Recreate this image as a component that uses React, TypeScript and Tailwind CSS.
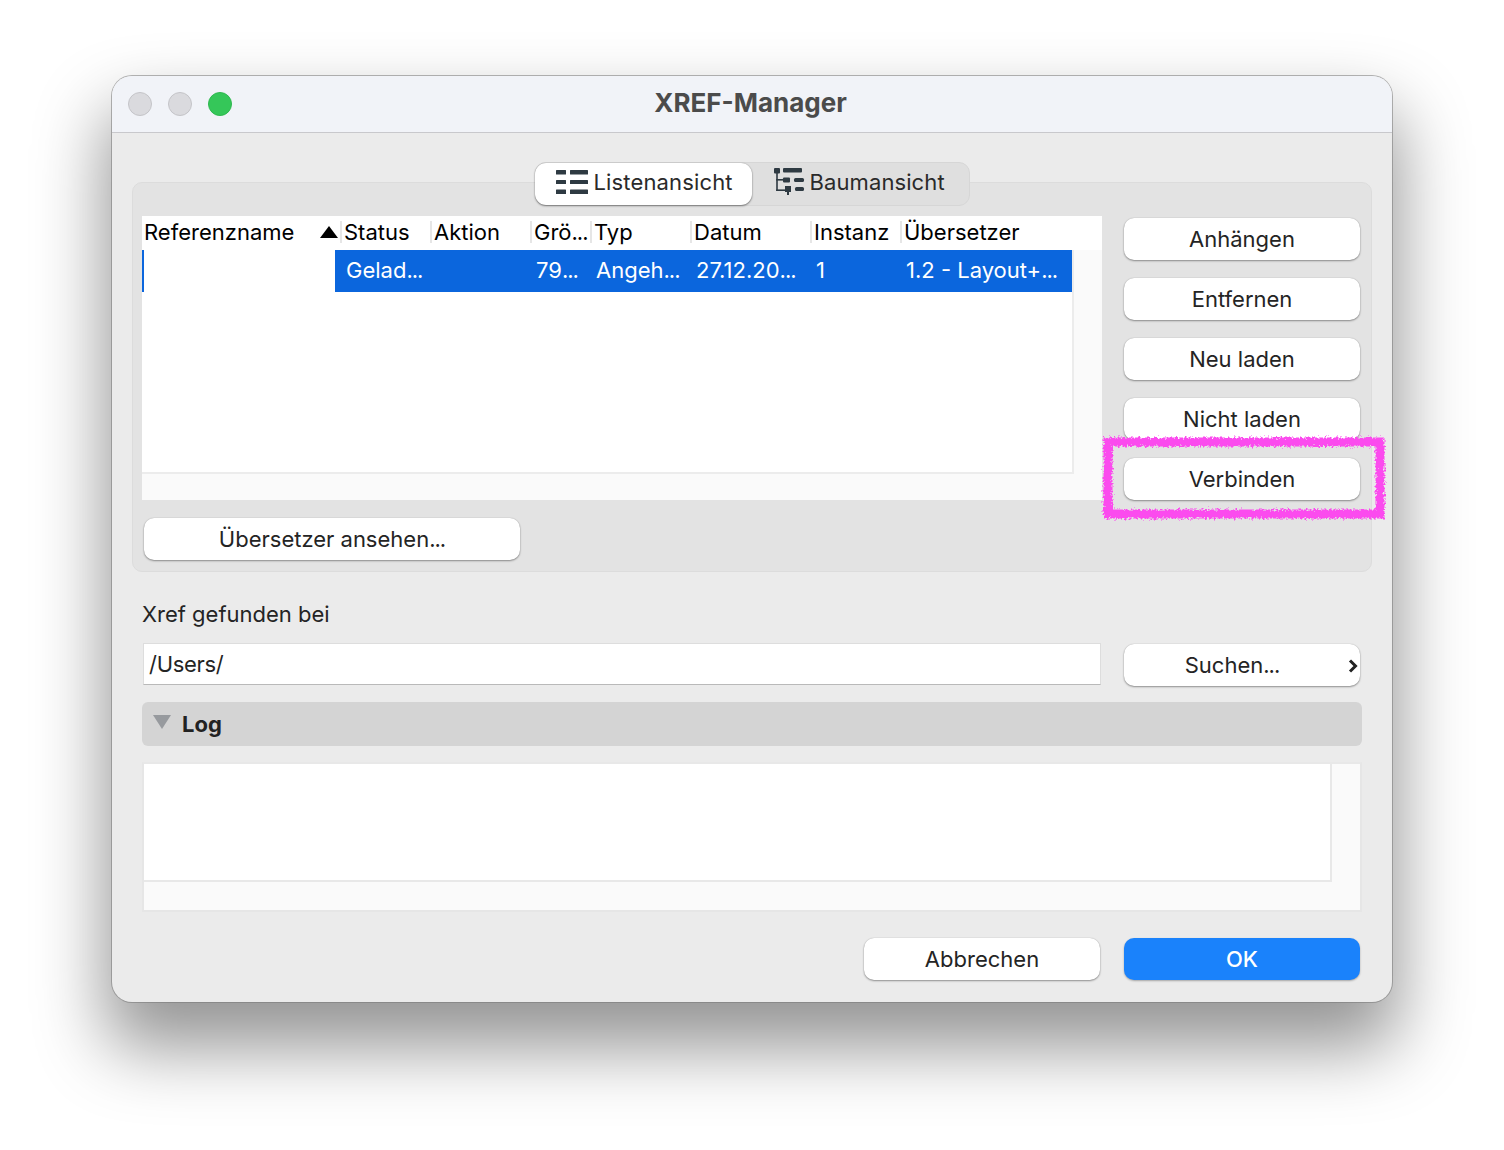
const font = { fontFamily: 'Inter, "Liberation Sans", sans-serif' };

function Dots({ text }: { text: string }) {
  if (!text.endsWith("...")) return <>{text}</>;
  return (
    <>
      {text.slice(0, -3)}
      <span className="tracking-[-1px]">...</span>
    </>
  );
}

function Btn({ children, w = "w-[236px]" }: { children: React.ReactNode; w?: string }) {
  return (
    <button className={`${w} h-[42px] shrink-0 rounded-[10px] bg-white text-[22px] leading-[42px] text-[#242424] text-center shadow-[0_1px_2px_rgba(0,0,0,0.38),0_0_1px_rgba(0,0,0,0.25)]`}>
      {children}
    </button>
  );
}

function ListIcon() {
  return (
    <svg width="32" height="26" viewBox="0 0 32 26" fill="#2e3a42" className="shrink-0">
      <rect x="0" y="1" width="10" height="4.5" rx="0.5" />
      <rect x="14" y="1" width="18" height="4.5" rx="0.5" />
      <rect x="0" y="11" width="10" height="4" rx="0.5" />
      <rect x="14" y="11" width="18" height="4" rx="0.5" />
      <rect x="0" y="20.5" width="10" height="4.5" rx="0.5" />
      <rect x="14" y="20.5" width="18" height="4.5" rx="0.5" />
    </svg>
  );
}

function TreeIcon() {
  return (
    <svg width="32" height="30" viewBox="0 0 32 30" fill="#2e3a42" className="shrink-0">
      <rect x="0" y="1" width="6" height="5.5" rx="1" />
      <rect x="9" y="1" width="19" height="4.5" rx="1" />
      <rect x="2.2" y="6" width="1.6" height="18" />
      <rect x="2.2" y="12" width="8" height="1.6" />
      <rect x="2.2" y="22.4" width="10" height="1.6" />
      <rect x="9" y="10.5" width="7" height="5" rx="1" />
      <rect x="20" y="11" width="10" height="4" rx="1.5" />
      <path d="M11 19h6v6h-2v3h-2v-3h-2z" />
      <rect x="21" y="20" width="9" height="4" rx="1.5" />
    </svg>
  );
}

const head: [string, string][] = [
  ["Status", "w-[90px]"],
  ["Aktion", "w-[100px]"],
  ["Grö...", "w-[60px]"],
  ["Typ", "w-[100px]"],
  ["Datum", "w-[120px]"],
  ["Instanz", "w-[90px]"],
  ["Übersetzer", "w-[170px]"],
];

const cells: [string, string][] = [
  ["Gelad...", "w-[190px]"],
  ["79...", "w-[60px]"],
  ["Angeh...", "w-[100px]"],
  ["27.12.20...", "w-[120px]"],
  ["1", "w-[90px]"],
  ["1.2 - Layout+...", "w-[166px]"],
];

export default function App() {
  return (
    <div className="w-[1504px] h-[1150px] bg-white pt-[76px] pl-[112px] relative overflow-hidden" style={font}>
      <div className="w-[1280px] h-[926px] rounded-[20px] bg-[#ebebeb] overflow-hidden shadow-[0_0_0_1px_rgba(120,120,120,0.55),0_40px_70px_6px_rgba(0,0,0,0.42)] relative">
        <div className="h-[57px] bg-[#f1f3f8] border-b border-[#c8c8cc] flex items-center pl-4 relative">
          <div className="flex gap-4">
            <span className="w-6 h-6 rounded-full bg-[#dadade] border border-[#c4c4c8]" />
            <span className="w-6 h-6 rounded-full bg-[#dadade] border border-[#c4c4c8]" />
            <span className="w-6 h-6 rounded-full bg-[#35c759] border border-[#2fb84f]" />
          </div>
          <div className="flex-1 text-center font-bold text-[26px] text-[#4b4b4b] pr-[123px] -mt-[3px]">XREF-Manager</div>
        </div>

        <div className="pt-[29px]">
          <div className="flex justify-center -mb-[24px] relative z-10">
            <div className="w-[435px] h-[44px] rounded-[11px] bg-[#dfdfdf] border border-[#d6d6d6] flex items-stretch">
              <div className="w-[217px] -ml-px rounded-[11px] bg-white shadow-[0_1px_2px_rgba(0,0,0,0.45),0_0_1px_rgba(0,0,0,0.3)] flex items-center pl-[21px] pb-[4px] gap-[6px] text-[22px] text-[#2a2a2a] tracking-[0.15px]">
                <ListIcon />
                <span>Listenansicht</span>
              </div>
              <div className="flex items-center pl-[22px] pb-[4px] gap-[4px] text-[22px] text-[#2a2a2a] tracking-[0.1px]">
                <TreeIcon />
                <span>Baumansicht</span>
              </div>
            </div>
          </div>

          <div className="mx-5 h-[390px] rounded-[10px] bg-[#e3e3e3] border border-[#dcdcdc] pt-[33px] pl-[9px]">
            <div className="flex gap-[22px]">
              <div className="w-[960px] h-[284px] bg-[#fafafa] flex flex-col">
                <div className="h-[34px] pb-[2px] bg-white flex items-center text-[22px] text-black shrink-0">
                  <div className="w-[198px] pl-[2px] flex items-center justify-between pr-[2px]">
                    <span>Referenzname</span>
                    <svg width="18" height="12" viewBox="0 0 18 12" className="shrink-0"><path d="M9 0l9 12H0z" fill="#000" /></svg>
                  </div>
                  {head.map(([t, w]) => (
                    <div key={t} className={`${w} flex items-center h-[22px] whitespace-nowrap`}>
                      <span className="w-[2px] h-[22px] bg-[#e6e6e6] mr-[2px] shrink-0" />
                      <span><Dots text={t} /></span>
                    </div>
                  ))}
                </div>
                <div className="w-[930px] h-[222px] bg-white border-r-2 border-b-2 border-[#ececec] box-content">
                  <div className="flex h-[42px]">
                    <div className="w-[193px] border-l-2 border-[#0b66dd]" />
                    <div className="flex-1 bg-[#0b66dd] flex items-center pl-[11px] pb-[2px] text-[22px] text-white whitespace-nowrap">
                      {cells.map(([t, w]) => (
                        <span key={t} className={w}><Dots text={t} /></span>
                      ))}
                    </div>
                  </div>
                </div>
              </div>
              <div className="flex flex-col gap-[18px] pt-[2px]">
                <Btn>Anhängen</Btn>
                <Btn>Entfernen</Btn>
                <Btn>Neu laden</Btn>
                <Btn>Nicht laden</Btn>
                <Btn>Verbinden</Btn>
              </div>
            </div>
            <div className="mt-[18px] ml-[2px]">
              <Btn w="w-[376px]"><Dots text="Übersetzer ansehen..." /></Btn>
            </div>
          </div>

          <div className="mx-[30px] mt-[28px] text-[22px] leading-[28px] text-[#242424]">Xref gefunden bei</div>

          <div className="mx-[30px] mt-[15px] flex items-start">
            <div className="ml-px w-[958px] h-[42px] bg-white border border-[#dddddd] border-b-[#b9b9b9] pl-[5px] text-[22px] leading-[40px] text-[#242424] tracking-[-0.3px]">/Users/</div>
            <div className="ml-[23px] mt-px relative">
              <Btn><span className="pr-5"><Dots text="Suchen..." /></span></Btn>
              <svg width="10" height="14" viewBox="0 0 10 14" className="absolute right-[2px] top-[15px]"><path d="M2 1.5L7.5 7 2 12.5" fill="none" stroke="#222" strokeWidth="3" /></svg>
            </div>
          </div>

          <div className="mx-[30px] mt-[16px] h-[44px] rounded-[6px] bg-[#d4d4d4] flex items-center pl-[11px] gap-[11px]">
            <svg width="18" height="14" viewBox="0 0 18 14" className="shrink-0 -mt-[5px]"><path d="M0 0h18L9 14z" fill="#979a9e" /></svg>
            <span className="font-bold text-[22px] text-[#222]">Log</span>
          </div>

          <div className="mx-[30px] mt-[16px] h-[150px] bg-[#fafafa] border-2 border-[#e6e6e6] border-t-[#e8e8e8]">
            <div className="w-[1188px] h-[118px] bg-white border-r-2 border-b-2 border-[#e8e8e8]" />
          </div>

          <div className="mt-[26px] pr-[32px] flex justify-end gap-6">
            <Btn>Abbrechen</Btn>
            <button className="w-[236px] h-[42px] rounded-[10px] bg-[#1a82fb] text-[22px] font-medium text-white shadow-[0_1px_2px_rgba(0,0,0,0.3)]">OK</button>
          </div>
        </div>
      </div>

      <svg width="300" height="100" viewBox="0 0 300 100" className="absolute left-[1094px] top-[428px] pointer-events-none">
        <defs>
          <filter id="rough" x="-5%" y="-10%" width="110%" height="120%">
            <feTurbulence type="fractalNoise" baseFrequency="0.45" numOctaves="3" seed="4" />
            <feDisplacementMap in="SourceGraphic" scale="7" />
          </filter>
        </defs>
        <rect x="14" y="14" width="272" height="72" fill="none" stroke="#fb4bee" strokeWidth="9" filter="url(#rough)" />
      </svg>
    </div>
  );
}
